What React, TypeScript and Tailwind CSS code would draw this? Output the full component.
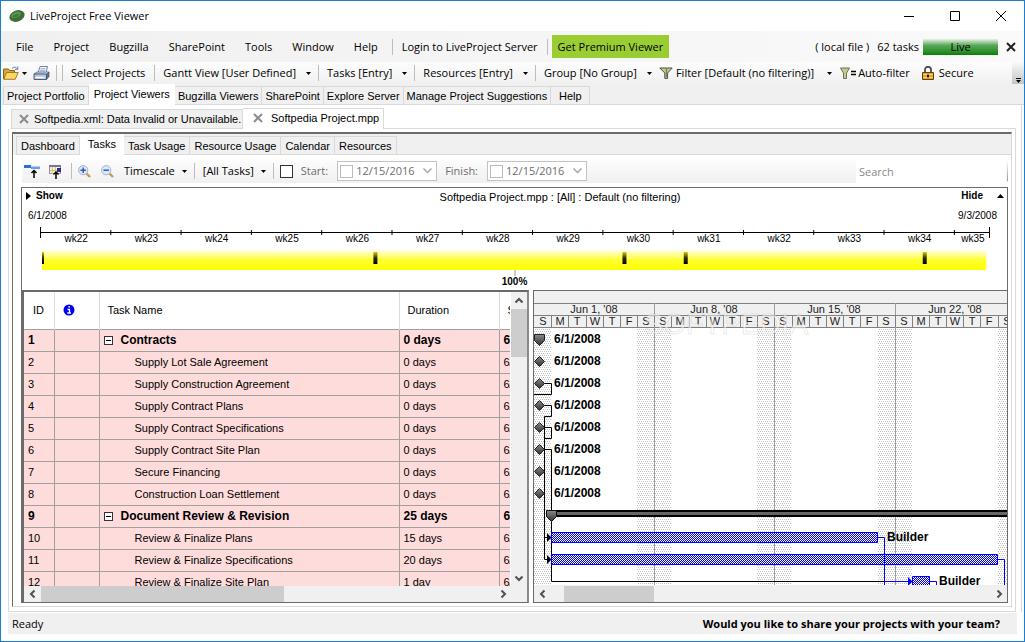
import { ReactNode } from 'react'

interface Task {
  id: number
  name: string
  duration: string
  summary?: boolean
}

const MENU = ['File', 'Project', 'Bugzilla', 'SharePoint', 'Tools', 'Window', 'Help']

const MAIN_TABS = [
  'Project Portfolio',
  'Project Viewers',
  'Bugzilla Viewers',
  'SharePoint',
  'Explore Server',
  'Manage Project Suggestions',
  'Help',
]

const VIEW_TABS = ['Dashboard', 'Tasks', 'Task Usage', 'Resource Usage', 'Calendar', 'Resources']

const TASKS: Task[] = [
  { id: 1, name: 'Contracts', duration: '0 days', summary: true },
  { id: 2, name: 'Supply Lot Sale Agreement', duration: '0 days' },
  { id: 3, name: 'Supply Construction Agreement', duration: '0 days' },
  { id: 4, name: 'Supply Contract Plans', duration: '0 days' },
  { id: 5, name: 'Supply Contract Specifications', duration: '0 days' },
  { id: 6, name: 'Supply Contract Site Plan', duration: '0 days' },
  { id: 7, name: 'Secure Financing', duration: '0 days' },
  { id: 8, name: 'Construction Loan Settlement', duration: '0 days' },
  { id: 9, name: 'Document Review & Revision', duration: '25 days', summary: true },
  { id: 10, name: 'Review & Finalize Plans', duration: '15 days' },
  { id: 11, name: 'Review & Finalize Specifications', duration: '20 days' },
  { id: 12, name: 'Review & Finalize Site Plan', duration: '1 day' },
]

function Caret() {
  return (
    <svg className="shrink-0" width="5" height="3" viewBox="0 0 5 3" aria-hidden="true">
      <path d="M0 0h5L2.5 3z" fill="#000" />
    </svg>
  )
}

function Separator() {
  return <span className="h-4 w-px bg-[#bdbdbd]" />
}

function DropButton({ children, wide = false }: { children: ReactNode; wide?: boolean }) {
  return (
    <button className={`flex items-center whitespace-nowrap pl-2 pr-[7px] ${wide ? 'gap-2.5' : 'gap-[7px]'}`}>
      {children}
      <Caret />
    </button>
  )
}

function Chevron({ dir }: { dir: 'up' | 'down' | 'left' | 'right' }) {
  const paths = {
    up: 'M1.5 6.5L5 3l3.5 3.5',
    down: 'M1.5 3.5L5 7l3.5-3.5',
    left: 'M6.5 1.5L3 5l3.5 3.5',
    right: 'M3.5 1.5L7 5 3.5 8.5',
  }
  return (
    <svg width="10" height="10" viewBox="0 0 10 10" aria-hidden="true">
      <path d={paths[dir]} fill="none" stroke="#505050" strokeWidth="2" />
    </svg>
  )
}

function CloseMark({ color }: { color: string }) {
  return (
    <svg className="shrink-0" width="10" height="10" viewBox="0 0 10 10" aria-hidden="true">
      <path d="M1 1l8 8M9 1L1 9" stroke={color} strokeWidth="2" />
    </svg>
  )
}

function TitleBar() {
  return (
    <header className="flex h-[30px] shrink-0 items-center bg-white pl-2">
      <svg width="16" height="14" viewBox="0 0 16 14" aria-hidden="true">
        <ellipse cx="8" cy="7" rx="7.8" ry="5.6" transform="rotate(-20 8 7)" fill="#3c6e35" />
        <ellipse cx="7" cy="5.8" rx="5" ry="2.8" transform="rotate(-20 7 6)" fill="#5f9153" />
        <ellipse cx="6.5" cy="6.6" rx="3" ry="1.4" transform="rotate(-20 7 6)" fill="#41773a" />
      </svg>
      <h1 className="flex-1 pl-[5px]">LiveProject Free Viewer</h1>
      <div className="flex">
        <button aria-label="Minimize" className="grid h-[30px] w-[46px] place-items-center">
          <svg width="10" height="10" viewBox="0 0 10 10">
            <path d="M0 5.5h10" stroke="#000" />
          </svg>
        </button>
        <button aria-label="Maximize" className="grid h-[30px] w-[46px] place-items-center">
          <svg width="10" height="10" viewBox="0 0 10 10">
            <path d="M.5.5h9v9h-9z" fill="none" stroke="#000" />
          </svg>
        </button>
        <button aria-label="Close" className="grid h-[30px] w-[46px] place-items-center">
          <svg width="10" height="10" viewBox="0 0 10 10">
            <path d="M0 0l10 10M10 0L0 10" stroke="#000" />
          </svg>
        </button>
      </div>
    </header>
  )
}

function MenuBar() {
  return (
    <nav className="flex h-[31px] shrink-0 items-center bg-linear-to-r from-[#f0f0f0] to-[#fafafa] pl-[5px]">
      {MENU.map((item) => (
        <button key={item} className="px-2.5">
          {item}
        </button>
      ))}
      <span className="ml-1 flex items-center">
        <Separator />
        <button className="whitespace-nowrap px-[9px]">Login to LiveProject Server</button>
        <Separator />
      </span>
      <button className="ml-1 h-[23px] whitespace-nowrap bg-[#9acd32] px-1.5">Get Premium Viewer</button>
      <div className="ml-auto flex items-center whitespace-nowrap">
        <span>( local file )</span>
        <span className="ml-2">62 tasks</span>
        <button className="ml-1 h-4 w-[75px] bg-linear-to-b from-[#e6f2e6] via-[#58a858] via-40% to-[#008000] leading-4">
          Live
        </button>
        <button aria-label="Close project" className="px-2">
          <CloseMark color="#222" />
        </button>
      </div>
    </nav>
  )
}

function FilterIcon() {
  return (
    <svg width="14" height="12" viewBox="0 0 14 12" aria-hidden="true">
      <path d="M.8 1h12.4L8.6 6v5.4H5.8V6z" fill="#c3cc93" stroke="#4c4f3c" />
      <path d="M7.5 2v8" stroke="#7c8256" strokeWidth="1.5" />
    </svg>
  )
}

function MainToolbar() {
  return (
    <div className="flex h-[22px] shrink-0 items-center whitespace-nowrap bg-linear-to-b from-[#fdfdfd] to-[#f0f0f0] pl-0.5">
      <button aria-label="Open" className="flex items-center gap-[3px]">
        <svg width="16" height="14" viewBox="0 0 16 14">
          <path d="M.5 13V3h5l1 1.5h5V7" fill="#d9a53a" stroke="#8a6414" />
          <path d="M.8 13.3L3.6 6.5h11.6l-3 6.8z" fill="#fbd66b" stroke="#a87a1c" />
          <path d="M9 2.5c2-2 4-1.5 5 0M14.8.5v2.8H12" fill="none" stroke="#5a7fae" />
        </svg>
        <Caret />
      </button>
      <button aria-label="Print" className="ml-1.5">
        <svg width="17" height="15" viewBox="0 0 17 15">
          <path d="M5 7l2-6.5h7.5L13 7z" fill="#f4f7fc" stroke="#7286a8" />
          <path d="M7.5 2.8h5M7 4.8h5" stroke="#8ea3c4" />
          <path d="M1 8l3-2h12l-2 2.5z" fill="#cfd9ea" stroke="#5f7090" strokeWidth=".8" />
          <path d="M1 8h12.5v5.5H1z" fill="#b5c3da" stroke="#4c5d7e" />
          <path d="M13.5 8.2L16 6v4.5l-2.5 3z" fill="#5c6f92" stroke="#44536f" strokeWidth=".7" />
          <path d="M2.5 11.5h9" stroke="#fff" strokeWidth="1.5" />
        </svg>
      </button>
      <span className="ml-1.5 flex gap-[5px]">
        <Separator />
        <Separator />
      </span>
      <button className="pl-2 pr-[9px]">Select Projects</button>
      <Separator />
      <DropButton wide>Gantt View [User Defined]</DropButton>
      <Separator />
      <DropButton wide>Tasks [Entry]</DropButton>
      <Separator />
      <DropButton wide>Resources [Entry]</DropButton>
      <Separator />
      <DropButton wide>Group [No Group]</DropButton>
      <button className="flex items-center gap-[3px]">
        <FilterIcon />
        Filter [Default (no filtering)]
        <span className="ml-2.5">
          <Caret />
        </span>
      </button>
      <button className="ml-2 flex items-center gap-0.5">
        <svg width="16" height="12" viewBox="0 0 16 12" aria-hidden="true">
          <path d="M.5 1h9L6.5 6v5.5h-3V6z" fill="#c3cc93" stroke="#6d7152" />
          <path d="M11 4.5h5M11 7.5h5" stroke="#000" strokeWidth="1.5" />
        </svg>
        Auto-filter
      </button>
      <button className="ml-3 flex items-center gap-[5px]">
        <svg width="12" height="14" viewBox="0 0 12 14" aria-hidden="true">
          <path d="M3 7V3.5a3 2.7 0 016 0V7" fill="none" stroke="#4d4d4d" strokeWidth="1.8" />
          <path d="M.5 6.5h11v7H.5z" fill="#e0a42c" stroke="#5e430c" />
          <path d="M1.5 8.5h9M1.5 11.5h9" stroke="#f8d678" />
          <path d="M6 8.5v3" stroke="#2e2005" strokeWidth="2" />
        </svg>
        Secure
      </button>
      <button
        aria-label="Toolbar options"
        className="ml-auto flex h-[22px] w-3 flex-col items-center justify-end gap-px bg-linear-to-b from-[#fafafa] to-[#c4c4c4] pb-px"
      >
        <span className="h-px w-[5px] bg-black" />
        <Caret />
      </button>
    </div>
  )
}

function TabStrip({ tabs, active, roomy = false }: { tabs: string[]; active: string; roomy?: boolean }) {
  return (
    <div
      role="tablist"
      className={`flex h-[21px] shrink-0 items-end bg-[#f0f0f0] font-['Liberation_Sans',sans-serif] ${roomy ? 'pl-[3px]' : 'pl-0.5'}`}
    >
      {tabs.map((tab) =>
        tab === active ? (
          <button
            key={tab}
            role="tab"
            aria-selected="true"
            className={`h-[21px] whitespace-nowrap bg-white pb-0.5 ${roomy ? 'px-2' : 'px-[5px]'}`}
          >
            {tab}
          </button>
        ) : (
          <button
            key={tab}
            role="tab"
            aria-selected="false"
            className={`h-[19px] min-w-[39px] whitespace-nowrap border border-l-0 border-[#d9d9d9] first:border-l ${roomy ? 'px-1' : 'px-[3px]'}`}
          >
            {tab}
          </button>
        )
      )}
      <span className="flex-1 border-b border-[#d9d9d9]" />
    </div>
  )
}

function FileTabs() {
  return (
    <div role="tablist" className="flex h-[21px] shrink-0 items-end pl-[3px] font-['Liberation_Sans',sans-serif]">
      <button
        role="tab"
        aria-selected="false"
        className="flex h-5 w-[232px] items-center gap-[5px] whitespace-nowrap border border-[#d9d9d9] bg-[#f0f0f0] pl-[7px]"
      >
        <CloseMark color="#8c8c8c" />
        Softpedia.xml: Data Invalid or Unavailable.
      </button>
      <button
        role="tab"
        aria-selected="true"
        className="flex h-[21px] w-[141px] items-center gap-2 whitespace-nowrap border border-b-0 border-l-0 border-[#d9d9d9] bg-white pb-0.5 pl-2.5"
      >
        <CloseMark color="#8c8c8c" />
        Softpedia Project.mpp
      </button>
      <span className="flex-1 border-b border-[#d9d9d9]" />
    </div>
  )
}

function DatePicker({ id, label }: { id: string; label: string }) {
  return (
    <div className="flex items-center text-[#6d6d6d]">
      <label htmlFor={id} className="px-2">
        {label}
      </label>
      <div className="ml-px flex h-5 w-[100px] items-center border border-[#c3c3c3] bg-white pl-0.5">
        <input
          type="checkbox"
          aria-label={`Use ${label}`}
          className="size-[13px] shrink-0 appearance-none border border-[#bcbcbc] bg-white"
        />
        <input id={id} type="text" defaultValue="12/15/2016" className="w-[70px] min-w-0 pl-[3px] outline-none" />
        <button aria-label={`Choose ${label}`}>
          <svg width="9" height="6" viewBox="0 0 9 6">
            <path d="M.5.5l4 4 4-4" fill="none" stroke="#a8a8a8" strokeWidth="1.5" />
          </svg>
        </button>
      </div>
    </div>
  )
}

function Magnifier({ plus }: { plus: boolean }) {
  return (
    <svg width="13" height="13" viewBox="0 0 13 13" aria-hidden="true">
      <path d="M8.5 8.5l3.5 3.5" stroke="#c9984c" strokeWidth="2.4" />
      <circle cx="5.2" cy="5.2" r="4.6" fill="#dbe8fa" stroke="#9db4da" />
      <path d={plus ? 'M2.5 5.2h5.4M5.2 2.5v5.4' : 'M2.5 5.2h5.4'} stroke="#3a5aa8" strokeWidth="1.5" />
    </svg>
  )
}

function ViewToolbar() {
  return (
    <div className="ml-[9px] mr-[3px] mt-1 flex h-6 shrink-0 items-center bg-linear-to-b from-[#fdfdfd] to-[#f0f0f0] pl-0.5">
      <button aria-label="Go to task">
        <svg width="16" height="15" viewBox="0 0 16 15">
          <path d="M0 1h7v3H0z" fill="#2f6fd0" />
          <path d="M7 2.5h9V5H7z" fill="#6aa0ea" />
          <path d="M10 14V7M7.5 9L10 6.5 12.5 9" fill="none" stroke="#000" strokeWidth="1.5" />
        </svg>
      </button>
      <button aria-label="Go to date" className="ml-2">
        <svg width="15" height="15" viewBox="0 0 15 15">
          <path d="M1.5 1.5h11v8h-11z" fill="#fbf3c4" stroke="#8b8bb0" />
          <path d="M1 2h12" stroke="#7373a8" strokeWidth="2" />
          <path d="M4.5 3v7M7.5 3v7M2 6.5h9" stroke="#d2c48a" />
          <path d="M9 4h4v4H9z" fill="#2b2b88" />
          <path d="M8 15V8M5.5 10.5L8 8l2.5 2.5" fill="none" stroke="#000" strokeWidth="1.5" />
        </svg>
      </button>
      <span className="ml-2 mr-1.5 h-4 w-px bg-[#bdbdbd]" />
      <button aria-label="Zoom in">
        <Magnifier plus />
      </button>
      <button aria-label="Zoom out" className="ml-2.5 mr-0.5">
        <Magnifier plus={false} />
      </button>
      <DropButton>Timescale</DropButton>
      <Separator />
      <DropButton>[All Tasks]</DropButton>
      <Separator />
      <input
        type="checkbox"
        aria-label="Filter by date"
        className="ml-1.5 size-[13px] appearance-none border border-[#333] bg-white"
      />
      <DatePicker id="start" label="Start:" />
      <DatePicker id="finish" label="Finish:" />
      <input
        type="search"
        aria-label="Search"
        placeholder="Search"
        className="ml-auto h-[23px] w-[150px] bg-white pl-[3px] outline-none placeholder:text-[#8a8a8a]"
      />
      <span className="ml-px h-5 w-px bg-linear-to-b from-white to-[#999]" />
    </div>
  )
}

// positions along the overview axis, in days from the project start
const TOTAL_DAYS = 94.5
const MARKERS = [33.2, 58, 64.1, 87.9]

function pct(days: number) {
  return `${(days / TOTAL_DAYS) * 100}%`
}

function Overview() {
  const weeks = Array.from({ length: 14 }, (_, i) => 22 + i)
  return (
    <section className="flex h-[102px] shrink-0 flex-col font-['Liberation_Sans',sans-serif] text-[10px]">
      <div className="flex h-4 items-center">
        <button className="flex items-center gap-[5px] pl-1 font-bold">
          <svg width="5" height="8" viewBox="0 0 5 8" aria-hidden="true">
            <path d="M0 0l5 4-5 4z" fill="#000" />
          </svg>
          Show
        </button>
        <h2 className="flex-1 pl-24 pt-0.5 text-center text-[11px]">
          Softpedia Project.mpp : [All] : Default (no filtering)
        </h2>
        <button className="flex items-center gap-3.5 pr-[3px] font-bold">
          Hide
          <svg width="7" height="4" viewBox="0 0 7 4" aria-hidden="true">
            <path d="M0 4h7L3.5 0z" fill="#000" />
          </svg>
        </button>
      </div>
      <div className="flex justify-between pl-1.5 pr-2.5 pt-1.5 leading-3">
        <span>6/1/2008</span>
        <span>9/3/2008</span>
      </div>
      <svg className="mx-[18px] mt-px overflow-visible" height="64" aria-label="Project overview">
        <defs>
          <linearGradient id="span" x1="0" x2="0" y1="0" y2="1">
            <stop offset="0" stopColor="#ffffe8" />
            <stop offset=".5" stopColor="#ffff30" />
            <stop offset="1" stopColor="#ffff00" />
          </linearGradient>
          <linearGradient id="mark" x1="0" x2="0" y1="0" y2="1">
            <stop offset="0" stopColor="#e0c800" />
            <stop offset=".5" stopColor="#302800" />
            <stop offset="1" stopColor="#000" />
          </linearGradient>
        </defs>
        <rect y="9" width="100%" height="1" />
        <rect y="4" width="1" height="11" />
        <rect x="100%" y="4" width="1" height="11" />
        {weeks.map((wk, i) => (
          <g key={wk}>
            {i > 0 && <rect x={pct(i * 7)} y="7" width="1" height="5" />}
            <text x={pct(i < 13 ? i * 7 + 3.6 : 92.9)} y="19" textAnchor="middle">
              wk{wk}
            </text>
          </g>
        ))}
        <rect x="2" y="27" width="99.5%" height="20" fill="url(#span)" />
        <rect x="2" y="29" width="2" height="12" fill="url(#mark)" />
        {MARKERS.map((day) => (
          <rect key={day} x={pct(day)} y="29" width="4" height="12" fill="url(#mark)" />
        ))}
        <rect x="50%" y="47" width="1" height="6" fill="#999" />
        <text x="50%" y="62" textAnchor="middle" fontWeight="bold">
          100%
        </text>
      </svg>
    </section>
  )
}

function TaskTable() {
  return (
    <div className="flex w-[507px] shrink-0 flex-col overflow-hidden border-2 border-b border-[#6b6b6b] border-r-[#8a8a8a] bg-white">
      <div className="flex min-h-0 flex-1">
        <div className="min-w-0 flex-1 overflow-hidden">
          <table className="w-[574px] table-fixed border-collapse font-['Liberation_Sans',sans-serif]">
            <colgroup>
              <col className="w-[30px]" />
              <col className="w-[45px]" />
              <col className="w-[300px]" />
              <col className="w-[100px]" />
              <col className="w-[99px]" />
            </colgroup>
            <thead>
              <tr className="h-[37px] border-b border-[#a0a0a0] text-left">
                <th className="border-r border-[#dcdcdc] pl-[9px] font-normal">ID</th>
                <th className="border-r border-[#dcdcdc] pl-2">
                  <svg width="12" height="12" viewBox="0 0 12 12" aria-label="Indicators">
                    <circle cx="6" cy="6" r="5.5" fill="#0000f0" />
                    <path d="M4.5 5.5h2v3.5M4.3 9h3.6M5.3 2.8h1.7" fill="none" stroke="#fff" strokeWidth="1.3" />
                  </svg>
                </th>
                <th className="border-r border-[#dcdcdc] pl-2 font-normal">Task Name</th>
                <th className="border-r border-[#dcdcdc] pl-2 font-normal">Duration</th>
                <th className="pl-2 font-normal">Start</th>
              </tr>
            </thead>
            <tbody>
              {TASKS.map((task) => (
                <tr
                  key={task.id}
                  className={`h-[22px] border-b border-[#a0a0a0] bg-[#ffdcdc] ${task.summary ? 'text-xs font-bold' : ''}`}
                >
                  <td className="border-r border-[#a0a0a0] pl-1">{task.id}</td>
                  <td className="border-r border-[#a0a0a0]"></td>
                  <td className={`border-r border-[#a0a0a0] ${task.summary ? 'pl-1' : 'pl-[35px]'}`}>
                    {task.summary ? (
                      <span className="flex items-center gap-2">
                        <button
                          aria-label={`Collapse ${task.name}`}
                          className="grid size-[9px] place-items-center border border-[#333] bg-white"
                        >
                          <span className="h-px w-[5px] bg-black" />
                        </button>
                        {task.name}
                      </span>
                    ) : (
                      task.name
                    )}
                  </td>
                  <td className="border-r border-[#a0a0a0] pl-1">{task.duration}</td>
                  <td className="pl-1">6/1/2008</td>
                </tr>
              ))}
            </tbody>
          </table>
        </div>
        <div className="ml-px flex w-4 flex-col items-center bg-[#f0f0f0]">
          <button aria-label="Scroll up" className="grid h-[17px] place-items-center">
            <Chevron dir="up" />
          </button>
          <span className="h-12 w-full bg-[#cdcdcd]" />
          <button aria-label="Scroll down" className="mt-auto grid h-[17px] place-items-center">
            <Chevron dir="down" />
          </button>
        </div>
      </div>
      <div className="flex h-4 shrink-0 items-center bg-[#f0f0f0] pr-4">
        <button aria-label="Scroll left" className="grid h-4 w-[17px] place-items-center">
          <Chevron dir="left" />
        </button>
        <span className="h-4 w-[243px] bg-[#cdcdcd]" />
        <button aria-label="Scroll right" className="ml-auto grid h-4 w-[17px] place-items-center">
          <Chevron dir="right" />
        </button>
      </div>
    </div>
  )
}

const DAY = 17.17
const WEEK = 120.2
const DAYS = ['S', 'M', 'T', 'W', 'T', 'F', 'S']
const WEEK_LABELS = ["Jun 1, '08", "Jun 8, '08", "Jun 15, '08", "Jun 22, '08"]

function Milestone({ y }: { y: number }) {
  return <path d={`M5.5 ${y - 5}l5 5-5 5-5-5z`} fill="url(#steel)" stroke="#222" />
}

function GanttChart() {
  const dayCells = Array.from({ length: 28 }, (_, i) => i)
  return (
    <svg className="w-full flex-1 overflow-hidden" aria-label="Gantt chart" fontFamily="Liberation Sans, sans-serif">
      <defs>
        <pattern id="dots" width="4" height="4" patternUnits="userSpaceOnUse">
          <rect width="1" height="1" fill="#c4c4c4" />
          <rect x="2" width="1" height="1" fill="#c4c4c4" />
          <rect x="1" y="2" width="1" height="1" fill="#c4c4c4" />
          <rect x="3" y="2" width="1" height="1" fill="#c4c4c4" />
        </pattern>
        <pattern id="hatch" width="2" height="2" patternUnits="userSpaceOnUse">
          <rect width="2" height="2" fill="#fff" />
          <rect width="1" height="1" fill="#0000d0" />
          <rect x="1" y="1" width="1" height="1" fill="#0000d0" />
        </pattern>
        <linearGradient id="steel" x1="0" x2="0" y1="0" y2="1">
          <stop offset="0" stopColor="#8a8a8a" />
          <stop offset="1" stopColor="#303030" />
        </linearGradient>
      </defs>

      <rect width="100%" height="37" fill="#f0f0f0" />
      <g fill="#808080">
        <rect y="12" width="100%" height="1" />
        <rect y="24" width="100%" height="1" />
        <rect y="36" width="100%" height="1" />
      </g>

      {/* weekend shading */}
      <rect y="37" width="17" height="100%" fill="url(#dots)" />
      {[1, 2, 3, 4].map((w) => (
        <g key={w}>
          <rect x={Math.round(w * WEEK - 17)} y="37" width="34" height="100%" fill="url(#dots)" />
          <rect x={Math.round(w * WEEK)} y="12" width="1" height="100%" fill="#9c9c9c" />
        </g>
      ))}

      {WEEK_LABELS.map((label, i) => (
        <text key={label} x={Math.round(i * WEEK + 60)} y="22" fontSize="11" textAnchor="middle" fill="#222">
          {label}
        </text>
      ))}
      {dayCells.map((d) => (
        <g key={d}>
          {d > 0 && <rect x={Math.round(d * DAY)} y="24" width="1" height="12" fill="#808080" />}
          <text x={Math.round(d * DAY + 9)} y="34" fontSize="11" textAnchor="middle" fill="#222">
            {DAYS[d % 7]}
          </text>
        </g>
      ))}

      <text x="110" y="43" fontSize="29" fill="#fff" fillOpacity=".5" stroke="#666" strokeOpacity=".15">
        SOFTPEDIA
      </text>

      {/* dependency links */}
      <g fill="none" stroke="#000">
        <path d="M10 92.5h7.5v11H0" />
        <path d="M10 114.5h7.5v11h-7v143h5" />
        <path d="M10 136.5h7.5v11h-7" />
        <path d="M10 158.5h7.5v132H374" />
        <path d="M10.5 246.5h5" />
      </g>
      <path d="M13 242l4.5 4.5-4.5 4.5zM13 264l4.5 4.5-4.5 4.5z" />

      <path d="M.5 43.5h10v6l-5 5-5-5z" fill="url(#steel)" stroke="#222" />
      {[70, 92, 114, 136, 158, 180, 202].map((y) => (
        <Milestone key={y} y={y + 0.5} />
      ))}
      <g fontSize="12" fontWeight="bold">
        {[52, 74, 96, 118, 140, 162, 184, 206].map((y) => (
          <text key={y} x="20" y={y}>
            6/1/2008
          </text>
        ))}
        <text x="353" y="250">
          Builder
        </text>
        <text x="405" y="294">
          Builder
        </text>
      </g>

      <rect x="13" y="219" width="100%" height="7" />
      <rect x="13" y="221" width="100%" height="3" fill="#666" />
      <path d="M12.5 219.5h10v6l-5 5-5-5z" fill="url(#steel)" stroke="#111" />

      <g fill="url(#hatch)" stroke="#0000ff">
        <path d="M17.5 241.5h326v10h-326zM17.5 263.5h446v10h-446zM378.5 285.5h17v10h-17z" />
      </g>
      <path d="M344 246.5h6.5V300M464 268.5h6.5V300M396 290.5h6.5V300M350 290.5h26" fill="none" stroke="#0000ff" />
      <path d="M374 286l4.5 4.5-4.5 4.5z" fill="#0000ff" />
    </svg>
  )
}

function GanttPane() {
  return (
    <div className="flex min-w-0 flex-1 flex-col border border-r-0 border-[#6b6b6b] bg-white">
      <GanttChart />
      <div className="flex h-[17px] shrink-0 items-center bg-[#f0f0f0]">
        <button aria-label="Scroll left" className="grid h-4 w-[17px] place-items-center">
          <Chevron dir="left" />
        </button>
        <span className="ml-[13px] h-4 w-[90px] bg-[#cdcdcd]" />
        <button aria-label="Scroll right" className="ml-auto grid h-4 w-[17px] place-items-center">
          <Chevron dir="right" />
        </button>
      </div>
    </div>
  )
}

export default function App() {
  return (
    <div className="flex h-screen flex-col overflow-hidden border border-[#1a7fd4] bg-white font-['Open_Sans',sans-serif] text-[11px] leading-4 text-black">
      <TitleBar />
      <MenuBar />
      <MainToolbar />
      <TabStrip tabs={MAIN_TABS} active="Project Viewers" />

      <main className="mr-0.5 flex min-h-0 flex-1 flex-col border-r border-[#d9d9d9] pl-[7px] pr-[5px] pt-[3px]">
        <FileTabs />
        <div className="flex min-h-0 flex-1 flex-col border border-t-0 border-[#d9d9d9] px-[3px] pb-1 pt-[3px]">
          <div className="flex min-h-0 flex-1 flex-col border border-t-2 border-[#6b6b6b] border-b-[#d9d9d9] border-r-[#d9d9d9] pb-[3px]">
            <TabStrip tabs={VIEW_TABS} active="Tasks" roomy />
            <ViewToolbar />
            <div className="ml-2 mr-[3px] mt-1 flex min-h-0 flex-1 flex-col border border-[#6b6b6b] border-b-0">
              <Overview />
              <div className="flex min-h-0 flex-1 gap-1">
                <TaskTable />
                <GanttPane />
              </div>
            </div>
          </div>
        </div>
      </main>

      <footer className="mx-[7px] mb-[7px] mt-px flex h-[21px] shrink-0 items-center justify-between bg-[#f0f0f0] pl-1 pr-[17px]">
        <span>Ready</span>
        <a href="#share" className="font-bold">
          Would you like to share your projects with your team?
        </a>
      </footer>
    </div>
  )
}
